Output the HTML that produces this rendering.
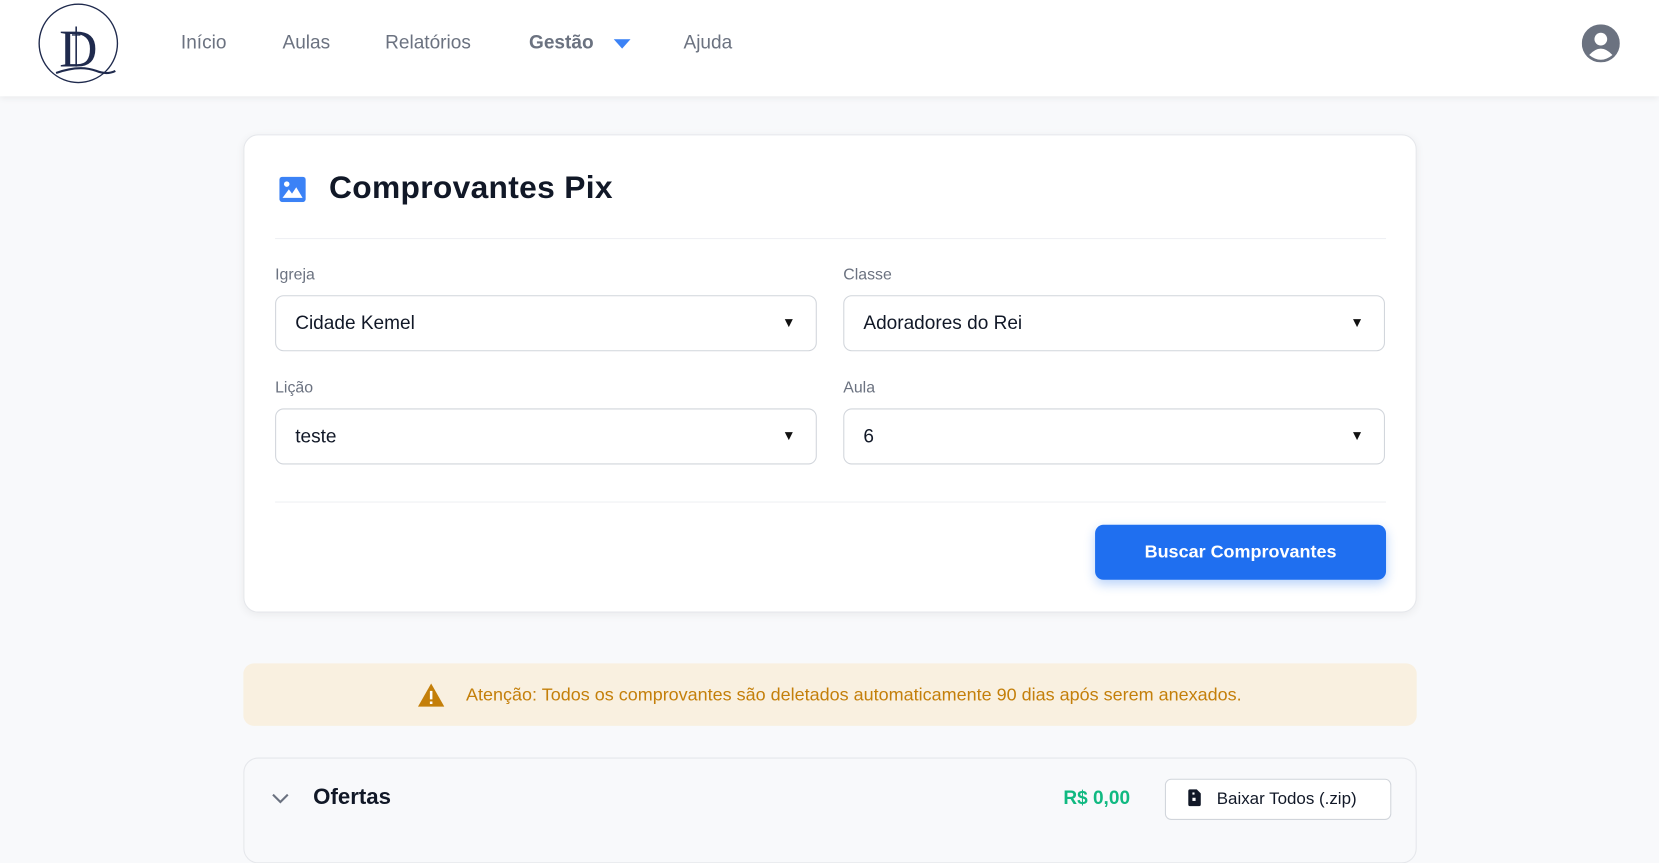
<!DOCTYPE html>
<html><head><meta charset="utf-8"><style>
*{box-sizing:border-box;margin:0;padding:0}
body{width:1659px;height:835px;overflow:hidden;background:#f8f9fb;font-family:"Liberation Sans",sans-serif}
#w{width:1568px;height:789px;transform:scale(1.05804);transform-origin:0 0;position:relative}
.a{position:absolute}
header{position:absolute;left:0;top:0;width:1568px;height:91px;background:#fff;box-shadow:0 2px 6px rgba(0,0,0,.06)}
.nav{position:absolute;top:30px;font-size:18px;color:#6b7280}
.card{position:absolute;left:230px;top:127px;width:1109px;height:452px;background:#fff;border:1px solid #e5e7eb;border-radius:14px;box-shadow:0 2px 8px rgba(0,0,0,.06)}
.lbl{position:absolute;font-size:15px;color:#6b7280}
.sel{position:absolute;width:512px;height:53px;border:1px solid #d1d5db;border-radius:8px;background:#fff;font-size:18px;color:#111827;padding:15px 0 0 18px}
.sel:after{content:"▼";position:absolute;right:19px;top:17px;font-size:13px;color:#111}
</style></head><body><div id="w">
<header>
<svg class="a" style="left:35px;top:3px" width="78" height="76" viewBox="0 0 78 76"><ellipse cx="39" cy="38" rx="37" ry="37" fill="none" stroke="#1f2a4d" stroke-width="1.3"/><text x="21" y="60" font-family="Liberation Serif" font-size="50" fill="#1f2a4d">D</text><line x1="37" y1="22" x2="37" y2="60" stroke="#1f2a4d" stroke-width="1.5"/><line x1="33" y1="30" x2="41" y2="30" stroke="#1f2a4d" stroke-width="1.3"/><path d="M18 66 Q40 58 56 64 Q66 68 74 64" fill="none" stroke="#1f2a4d" stroke-width="2"/></svg>
<div class="nav" style="left:171px">Início</div>
<div class="nav" style="left:267px">Aulas</div>
<div class="nav" style="left:364px">Relatórios</div>
<div class="nav" style="left:500px;font-weight:bold">Gestão</div>
<svg class="a" style="left:580px;top:37px" width="16" height="10"><path d="M0 0H16L8 9Z" fill="#3b82f6"/></svg>
<div class="nav" style="left:646px">Ajuda</div>
<svg class="a" style="left:1495px;top:23px" width="36" height="36" viewBox="0 0 36 36"><circle cx="18" cy="18" r="18" fill="#6b7280"/><circle cx="18" cy="14" r="6" fill="#fff"/><path d="M7 29 Q18 17 29 29 Q18 38 7 29Z" fill="#fff"/></svg>
</header>
<div class="card">
<svg class="a" style="left:33px;top:39px" width="25" height="24" viewBox="0 0 25 24"><rect width="25" height="24" rx="3" fill="#3b82f6"/><circle cx="7" cy="7" r="2.6" fill="#fff"/><path d="M3 20 L9 12 L12 16 L16 10 L22 20Z" fill="#fff"/></svg>
<div class="a" style="left:80px;top:33px;font-size:30px;font-weight:bold;color:#111827;letter-spacing:0.3px">Comprovantes Pix</div>
<div class="a" style="left:29px;top:97px;width:1050px;height:1px;background:#eef0f3"></div>
<div class="lbl" style="left:29px;top:123px">Igreja</div>
<div class="sel" style="left:29px;top:151px">Cidade Kemel</div>
<div class="lbl" style="left:566px;top:123px">Classe</div>
<div class="sel" style="left:566px;top:151px">Adoradores do Rei</div>
<div class="lbl" style="left:29px;top:230px">Lição</div>
<div class="sel" style="left:29px;top:258px">teste</div>
<div class="lbl" style="left:566px;top:230px">Aula</div>
<div class="sel" style="left:566px;top:258px">6</div>
<div class="a" style="left:29px;top:346px;width:1050px;height:1px;background:#eef0f3"></div>
<div class="a" style="left:804px;top:368px;width:275px;height:52px;background:#1f6ff0;border-radius:8px;color:#fff;font-weight:bold;font-size:17px;text-align:center;line-height:52px;box-shadow:0 4px 10px rgba(31,111,240,.3)">Buscar Comprovantes</div>
</div>
<div class="a" style="left:230px;top:627px;width:1109px;height:59px;background:#f9f0e0;border-radius:10px;color:#c47f0a;font-size:17px;display:flex;align-items:center;justify-content:center;gap:20px">
<svg width="25" height="22" viewBox="0 0 25 22"><path d="M12.5 0 L25 22 H0Z" fill="#c47f0a"/><rect x="11.3" y="7" width="2.4" height="8" fill="#fff"/><rect x="11.3" y="17" width="2.4" height="2.4" fill="#fff"/></svg>
<span>Atenção: Todos os comprovantes são deletados automaticamente 90 dias após serem anexados.</span></div>
<div class="a" style="left:230px;top:716px;width:1109px;height:100px;background:#f8f9fb;border:1px solid #e5e7eb;border-radius:14px"></div>
<svg class="a" style="left:257px;top:750px" width="16" height="10"><path d="M1 1 L8 8 L15 1" fill="none" stroke="#6b7280" stroke-width="2"/></svg>
<div class="a" style="left:296px;top:742px;font-size:21px;font-weight:bold;color:#111827">Ofertas</div>
<div class="a" style="left:1005px;top:744px;font-size:18px;font-weight:bold;color:#10b981">R$ 0,00</div>
<div class="a" style="left:1101px;top:736px;width:214px;height:39px;background:#fff;border:1px solid #d1d5db;border-radius:6px;font-size:16px;color:#111827;line-height:37px;padding-left:48px">Baixar Todos (.zip)</div>
<svg class="a" style="left:1123px;top:746px" width="12" height="16" viewBox="0 0 12 16"><path d="M0 2 Q0 0 2 0 H8 L12 4 V14 Q12 16 10 16 H2 Q0 16 0 14Z" fill="#111827"/><rect x="4" y="3" width="2" height="2" fill="#fff"/><rect x="4" y="8" width="3" height="3" fill="#fff"/></svg>
</div></body></html>
